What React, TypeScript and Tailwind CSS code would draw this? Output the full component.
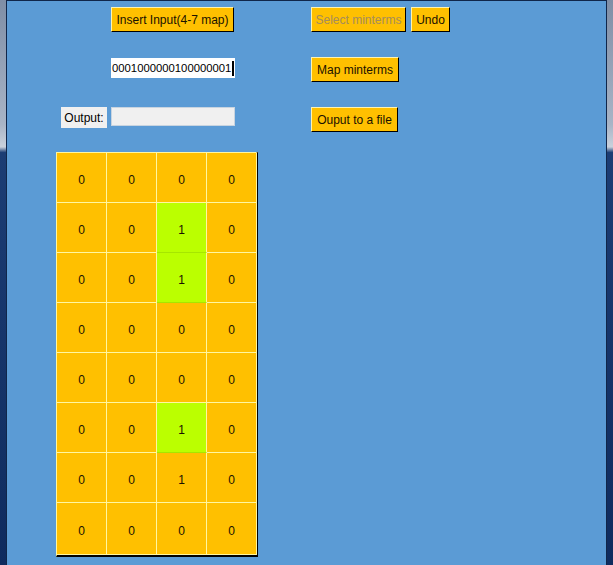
const cells = [
  [0, 0, 0, 0],
  [0, 0, 1, 0],
  [0, 0, 1, 0],
  [0, 0, 0, 0],
  [0, 0, 0, 0],
  [0, 0, 1, 0],
  [0, 0, 1, 0],
  [0, 0, 0, 0],
];

// which cells are highlighted (selected minterms)
const green = ["1-2", "2-2", "5-2"];

const btn =
  "h-[25px] px-[2px] bg-[#ffc000] border border-t-[#fff4b0] border-l-[#fff4b0] border-r-black border-b-black text-[12px] leading-none whitespace-nowrap flex items-center justify-center";

const App = () => (
  <div className="w-[613px] h-[565px] flex font-['Liberation_Sans',Arial,sans-serif] text-[#1a1200] overflow-hidden">
    <div className="w-[6px] h-full bg-[linear-gradient(to_bottom,#7f8ea6_0%,#a8b4c6_22%,#c9d1dc_26%,#1c3d74_27%,#0f2b5e_100%)]" />
    <div className="flex-1 h-full bg-[#5b9bd5] border-l border-t border-r border-[#10264a] pt-[6px]">
      <div className="h-[50px] flex items-start">
        <button className={btn + " ml-[104px] w-[123px]"}>Insert Input(4-7 map)</button>
        <button className={btn + " ml-[77px] w-[95px] text-[#a58d5c]"}>Select minterms</button>
        <button className={btn + " ml-[5px] w-[39px]"}>Undo</button>
      </div>
      <div className="h-[50px] flex items-start">
        <div className="ml-[104px] mt-px w-[124px] h-[20px] bg-white flex items-center pl-px text-[11.3px] text-black whitespace-nowrap overflow-hidden">
          <span>0001000000100000001</span>
          <span className="ml-px w-[2px] h-[15px] bg-black" />
        </div>
        <button className={btn + " ml-[76px] w-[88px]"}>Map minterms</button>
      </div>
      <div className="h-[45px] flex items-start">
        <div className="ml-[54px] w-[46px] h-[21px] bg-[#f0f0f0] flex items-center justify-center text-[12px] text-black">
          Output:
        </div>
        <div className="ml-[4px] w-[124px] h-[19px] bg-[#f0f0f0] border border-[#c8d4e0]" />
        <button className={btn + " ml-[76px] w-[87px]"}>Ouput to a file</button>
      </div>
      <div className="ml-[49px] w-[202px] border-l border-t border-[#fff7a0] border-r-2 border-r-black border-b-2 border-b-black">
        <div className="grid grid-cols-[repeat(4,50px)]">
          {cells.map((row, r) =>
            row.map((v, c) => {
              const on = green.includes(r + "-" + c);
              return (
                <div
                  key={r + "-" + c}
                  className={
                    (r === 7 ? "h-[52px] " : "h-[50px] ") +
                    "pt-[5px] flex items-center justify-center text-[12px] border-r border-b border-[#fff7a0] " +
                    (on ? "bg-[#bbff00] border-b-[#a6e600]" : "bg-[#ffc000]")
                  }
                >
                  {v}
                </div>
              );
            })
          )}
        </div>
      </div>
    </div>
    <div className="w-[6px] h-full bg-[linear-gradient(to_bottom,#7f8ea6_0%,#a8b4c6_22%,#c9d1dc_26%,#1c3d74_27%,#0f2b5e_100%)]" />
  </div>
);

export default App;
